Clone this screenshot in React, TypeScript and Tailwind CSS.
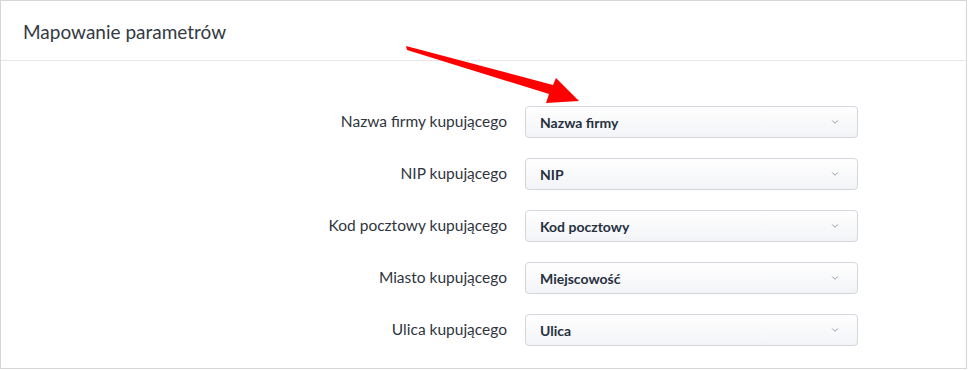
import { ChevronDown } from "lucide-react";

const rows = [
  { label: "Nazwa firmy kupującego", value: "Nazwa firmy" },
  { label: "NIP kupującego", value: "NIP" },
  { label: "Kod pocztowy kupującego", value: "Kod pocztowy" },
  { label: "Miasto kupującego", value: "Miejscowość" },
  { label: "Ulica kupującego", value: "Ulica" },
];

function Arrow() {
  return (
    <svg className="absolute left-0 top-0 pointer-events-none" width="970" height="370">
      <polygon
        points="406,46 553,85 556,78 579,101 546,103 549,94 407,50"
        fill="#ff0000"
      />
    </svg>
  );
}

export default function App() {
  return (
    <div className="relative w-[970px] h-[370px] bg-white font-['Lato',sans-serif]">
      <div className="w-[967px] h-[369px] border border-[#d6d6d6] bg-white flex flex-col">
        {/* Header */}
        <div className="h-[60px] border-b border-[#e6e6e6] flex items-center px-[22px] shrink-0">
          <h2 className="text-[19px] text-[#333a44] leading-none pt-[1px]">Mapowanie parametrów</h2>
        </div>

        {/* Mapping rows */}
        <div className="flex flex-col gap-[20px] pt-[45px]">
          {rows.map((row) => (
            <div key={row.label} className="flex items-center">
              <label className="ml-[306px] w-[200px] text-right text-[15.5px] text-[#2f3540]">
                {row.label}
              </label>
              <div className="ml-[18px] w-[333px] h-[32px] rounded-[4px] border border-[#d4d6df] bg-gradient-to-b from-white to-[#f3f4f7] flex items-center justify-between pl-[14px] pr-[17px]">
                <span className="text-[14px] font-bold text-[#27303f]">{row.value}</span>
                <ChevronDown className="w-[10px] h-[10px] text-[#7d8496]" strokeWidth={2} />
              </div>
            </div>
          ))}
        </div>
      </div>
      <Arrow />
    </div>
  );
}
